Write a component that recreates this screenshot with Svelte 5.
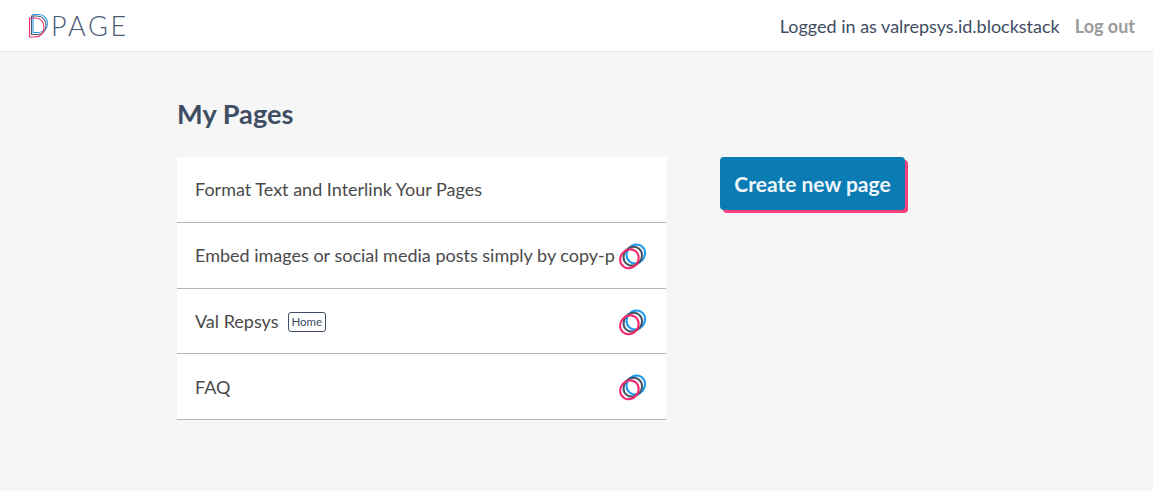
<script lang="ts">
  const pages = [
    { title: 'Format Text and Interlink Your Pages', published: false, home: false },
    { title: 'Embed images or social media posts simply by copy-pasting the link', published: true, home: false },
    { title: 'Val Repsys', published: true, home: true },
    { title: 'FAQ', published: true, home: false },
  ];
</script>

<header class="topbar">
  <div class="logo">
    <svg class="logo-mark" width="22" height="26" viewBox="0 0 22 26" fill="none" stroke-width="1.1">
      <path d="M5 1.500h5.500c5.500 0 9 3.900 9 9s-3.500 9-9 9H5z" stroke="#2f9be8" />
      <path d="M3.500 3h5.500c5.500 0 9 3.900 9 9.500S14.500 21.500 9 21.500H3.500z" stroke="#4a5a75" />
      <path d="M1.500 5H7c5.500 0 9 3.900 9 9.500S12.500 24 7 24H1.500z" stroke="#ee2f68" />
    </svg>
    <span class="logo-text">PAGE</span>
  </div>
  <nav class="user">
    <span>Logged in as valrepsys.id.blockstack</span>
    <a href="#logout" class="logout">Log out</a>
  </nav>
</header>

<main class="content">
  <section class="pages">
    <h1>My Pages</h1>
    <ul>
      {#each pages as page}
        <li>
          <span class="title">{page.title}</span>
          {#if page.home}
            <span class="home">Home</span>
          {/if}
          {#if page.published}
            <svg class="rings" width="30" height="30" viewBox="0 0 30 30" fill="none" stroke-width="2.1">
              <ellipse cx="18.800" cy="13" rx="8.900" ry="9.800" transform="rotate(40 18.800 13)" stroke="#1d9bf0" />
              <ellipse cx="15.800" cy="15.200" rx="8.900" ry="9.800" transform="rotate(40 15.800 15.200)" stroke="#4a5568" />
              <ellipse cx="12.400" cy="17.800" rx="8.900" ry="9.800" transform="rotate(40 12.400 17.800)" stroke="#f5286e" />
            </svg>
          {/if}
        </li>
      {/each}
    </ul>
  </section>
  <button class="create">Create new page</button>
</main>

<style>
  :global(body) {
    margin: 0;
    background: #f6f6f6;
    font-family: Lato, "Liberation Sans", sans-serif;
  }

  .topbar {
    display: flex;
    justify-content: space-between;
    align-items: center;
    box-sizing: border-box;
    height: 52px;
    padding: 0 18px 0 28px;
    background: #fff;
    border-bottom: 1px solid #e8e8e8;
  }

  .logo {
    display: flex;
    align-items: center;
  }

  .logo-mark {
    margin-right: 1px;
  }

  .logo-text {
    font-size: 27px;
    font-weight: 300;
    letter-spacing: 2.700px;
    color: #4a5a75;
  }

  .user {
    display: flex;
    gap: 15px;
    font-size: 18px;
    color: #3f4d63;
  }

  .logout {
    color: #9b9b9b;
    font-weight: 700;
    text-decoration: none;
  }

  .content {
    display: flex;
    align-items: flex-start;
    padding: 45px 0 71px 177px;
  }

  .pages {
    width: 489px;
  }

  h1 {
    margin: 0 0 27px;
    font-size: 27.200px;
    line-height: 33px;
    font-weight: 700;
    color: #3f4d63;
  }

  ul {
    margin: 0;
    padding: 0;
    list-style: none;
    background: #fff;
  }

  li {
    display: flex;
    align-items: center;
    box-sizing: border-box;
    height: 65.750px;
    padding: 0 18px;
    position: relative;
    border-bottom: 1px solid #b5b5b5;
    font-size: 18px;
    color: #4a4a4a;
  }

  .title {
    white-space: nowrap;
    overflow: hidden;
    max-width: 420px;
  }

  .home {
    margin: 2px 0 0 9px;
    padding: 0 3px;
    border: 1px solid #3f4d63;
    border-radius: 3px;
    font-size: 11.500px;
    line-height: 18px;
    color: #3f4d63;
  }

  .rings {
    position: absolute;
    right: 19px;
    top: 18px;
  }

  .create {
    margin: 60px 0 0 54px;
    width: 185px;
    height: 53px;
    padding: 0;
    border: none;
    border-radius: 4px;
    background: #0a7cb3;
    box-shadow: 3px 3px 0 #f5407f;
    color: #f0f6fa;
    font-family: inherit;
    font-size: 21px;
    font-weight: 700;
  }
</style>
